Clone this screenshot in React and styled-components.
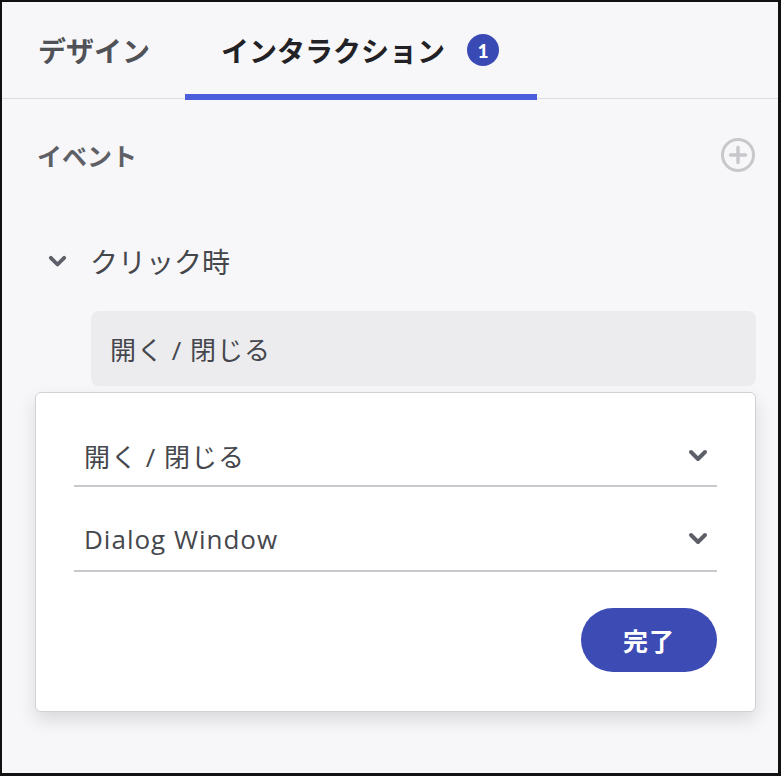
import React from 'react';
import styled, { createGlobalStyle } from 'styled-components';

const GlobalStyle = createGlobalStyle`
  html, body {
    margin: 0;
    padding: 0;
    background: #ffffff;
  }
  body {
    font-family: 'Open Sans', 'Noto Sans CJK JP', sans-serif;
  }
`;

function Chevron({ size = 20 }) {
  return (
    <svg width={size} height={size * 0.65} viewBox='0 0 20 13' fill='none'>
      <path d='M3 3 L10 10 L17 3' stroke='#5d6068' strokeWidth='4' strokeLinecap='round' strokeLinejoin='round' />
    </svg>
  );
}

function PlusCircle() {
  return (
    <svg width='36' height='36' viewBox='0 0 36 36' fill='none'>
      <circle cx='18' cy='18' r='15.5' stroke='#c7c7cc' strokeWidth='3' />
      <path d='M18 10.5 V25.5 M10.5 18 H25.5' stroke='#c7c7cc' strokeWidth='3.4' strokeLinecap='round' />
    </svg>
  );
}

function App() {
  const selects = ['開く / 閉じる', 'Dialog Window'];

  return (
    <>
      <GlobalStyle />
      <Frame>
        <TabBar>
          <Tab $width={183}>デザイン</Tab>
          <Tab $width={352} $active>
            インタラクション
            <Badge>1</Badge>
          </Tab>
        </TabBar>

        <Section>
          <SectionHeader>
            <SectionTitle>イベント</SectionTitle>
            <IconButton aria-label='add event'>
              <PlusCircle />
            </IconButton>
          </SectionHeader>

          <Trigger>
            <Chevron size={19} />
            <TriggerLabel>クリック時</TriggerLabel>
          </Trigger>

          <ActionBox>開く / 閉じる</ActionBox>

          <Popover>
            {selects.map((label, i) => (
              <Select key={label} $lift={i * 4}>
                <SelectValue>{label}</SelectValue>
                <Chevron size={20} />
              </Select>
            ))}
            <Footer>
              <DoneButton>完了</DoneButton>
            </Footer>
          </Popover>
        </Section>
      </Frame>
    </>
  );
}

export default App;

const Frame = styled.div`
  box-sizing: border-box;
  width: 781px;
  height: 776px;
  border: 2px solid #111;
  border-bottom-width: 3px;
  border-right-width: 3px;
  background: #f7f7f9;
  overflow: hidden;
`;

const TabBar = styled.div`
  display: flex;
  height: 96px;
  border-bottom: 1px solid #dcdce0;
`;

const Tab = styled.div`
  position: relative;
  box-sizing: border-box;
  width: ${({ $width }) => $width}px;
  display: flex;
  align-items: center;
  gap: 22px;
  padding: 0 0 0 36px;
  font-family: 'Noto Sans CJK JP', sans-serif;
  font-size: 28px;
  font-weight: 700;
  color: ${({ $active }) => ($active ? '#222226' : '#505258')};

  &::after {
    content: '';
    display: ${({ $active }) => ($active ? 'block' : 'none')};
    position: absolute;
    left: 0;
    right: 0;
    bottom: -2px;
    height: 6px;
    background: #4b5ddb;
  }
`;

const Badge = styled.span`
  width: 32px;
  height: 32px;
  border-radius: 50%;
  background: #3a4ab5;
  color: #fff;
  font-family: 'Lato', sans-serif;
  font-size: 19px;
  font-weight: 900;
  display: flex;
  align-items: center;
  justify-content: center;
`;

const Section = styled.div`
  display: flex;
  flex-direction: column;
  padding: 0 22px 0 33px;
`;

const SectionHeader = styled.div`
  display: flex;
  align-items: center;
  justify-content: space-between;
  height: 34px;
  margin-top: 39px;
`;

const SectionTitle = styled.h3`
  margin: 0 0 0 2px;
  font-family: 'Noto Sans CJK JP', sans-serif;
  font-size: 25px;
  font-weight: 700;
  color: #5e6066;
`;

const IconButton = styled.button`
  border: none;
  background: none;
  padding: 0;
  display: flex;
`;

const Trigger = styled.div`
  display: flex;
  align-items: center;
  gap: 23px;
  margin-top: 72px;
  padding-left: 13px;
  height: 34px;
`;

const TriggerLabel = styled.span`
  font-family: 'Noto Sans CJK JP', sans-serif;
  font-size: 28px;
  color: #45474d;
`;

const ActionBox = styled.div`
  margin: 33px 0 0 56px;
  height: 75px;
  box-sizing: border-box;
  padding-left: 19px;
  display: flex;
  align-items: center;
  background: #ececee;
  border-radius: 8px;
  font-family: 'Open Sans', 'Noto Sans CJK JP', sans-serif;
  font-size: 26px;
  letter-spacing: 1px;
  color: #45474d;
`;

const Popover = styled.div`
  margin: 6px 0 0 0;
  box-sizing: border-box;
  height: 320px;
  padding: 37px 38px 0;
  display: flex;
  flex-direction: column;
  gap: 28px;
  background: #fff;
  border: 1px solid #d2d2d6;
  border-radius: 6px;
  box-shadow: 0 8px 18px rgba(0, 0, 0, 0.12);
`;

const Select = styled.div`
  height: 57px;
  box-sizing: border-box;
  display: flex;
  align-items: center;
  justify-content: space-between;
  padding: 0 9px ${({ $lift }) => 4 + $lift}px 10px;
  border-bottom: 2px solid #c9c9cd;
`;

const SelectValue = styled.span`
  font-family: 'Open Sans', 'Noto Sans CJK JP', sans-serif;
  font-size: 26px;
  letter-spacing: 1px;
  color: #45474d;
`;

const Footer = styled.div`
  display: flex;
  justify-content: flex-end;
  margin-top: 8px;
`;

const DoneButton = styled.button`
  width: 136px;
  height: 64px;
  border: none;
  border-radius: 32px;
  background: #3c4cb4;
  color: #fff;
  font-family: 'Noto Sans CJK JP', sans-serif;
  font-size: 25px;
  font-weight: 700;
  letter-spacing: 1px;
`;
